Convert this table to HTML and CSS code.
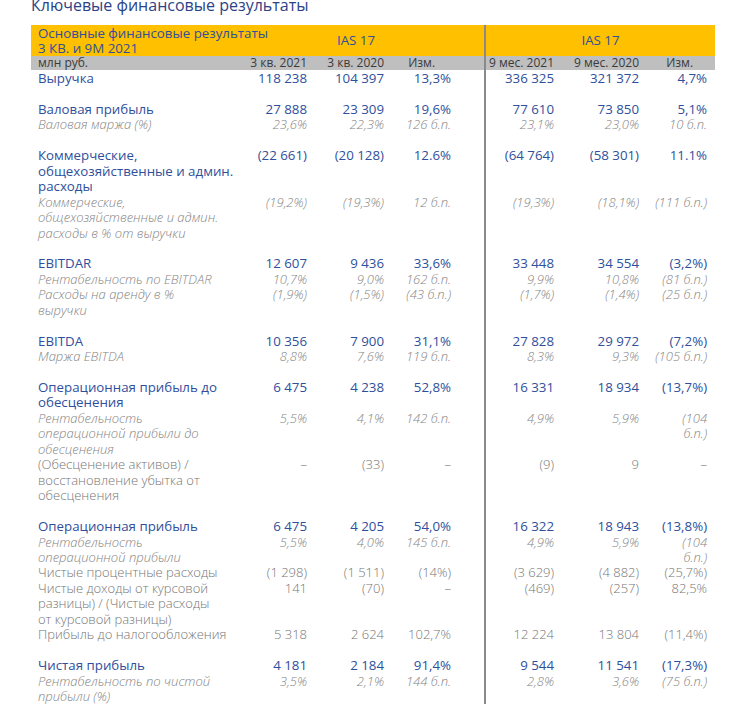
FILE: index.html
```html
<!DOCTYPE html>
<html lang="ru">
<head>
<meta charset="utf-8">
<link rel="stylesheet" href="styles.css">
</head>
<body>
<h1 class="title">Ключевые финансовые результаты</h1>
<table class="fin">
  <colgroup>
    <col class="c-label"><col class="c1"><col class="c2"><col class="c3"><col class="c4"><col class="c5"><col class="c6">
  </colgroup>
  <thead>
    <tr class="hdr">
      <th class="lbl">Основные финансовые результаты<br>3 КВ. и 9М 2021</th>
      <th colspan="3" class="ias">IAS 17</th>
      <th colspan="3" class="ias d">IAS 17</th>
    </tr>
    <tr class="sub">
      <th class="lbl">млн руб.</th>
      <th>3 кв. 2021</th>
      <th>3 кв. 2020</th>
      <th class="chg1">Изм.</th>
      <th class="d">9 мес. 2021</th>
      <th>9 мес. 2020</th>
      <th class="chg2">Изм.</th>
    </tr>
  </thead>
  <tbody>
    <tr class="main"><td class="lbl">Выручка</td><td>118 238</td><td>104 397</td><td>13,3%</td><td class="d">336 325</td><td>321 372</td><td>4,7%</td></tr>
    <tr class="sp"><td colspan="4"></td><td colspan="3" class="d"></td></tr>

    <tr class="main"><td class="lbl">Валовая прибыль</td><td>27 888</td><td>23 309</td><td>19,6%</td><td class="d">77 610</td><td>73 850</td><td>5,1%</td></tr>
    <tr class="it"><td class="lbl">Валовая маржа (%)</td><td>23,6%</td><td>22,3%</td><td>126 б.п.</td><td class="d">23,1%</td><td>23,0%</td><td>10 б.п.</td></tr>
    <tr class="sp"><td colspan="4"></td><td colspan="3" class="d"></td></tr>

    <tr class="main"><td class="lbl">Коммерческие,<br>общехозяйственные и админ.<br>расходы</td><td>(22 661)</td><td>(20 128)</td><td>12.6%</td><td class="d">(64 764)</td><td>(58 301)</td><td>11.1%</td></tr>
    <tr class="it"><td class="lbl">Коммерческие,<br>общехозяйственные и админ.<br>расходы в % от выручки</td><td>(19,2%)</td><td>(19,3%)</td><td>12 б.п.</td><td class="d">(19,3%)</td><td>(18,1%)</td><td>(111 б.п.)</td></tr>
    <tr class="sp"><td colspan="4"></td><td colspan="3" class="d"></td></tr>

    <tr class="main"><td class="lbl">EBITDAR</td><td>12 607</td><td>9 436</td><td>33,6%</td><td class="d">33 448</td><td>34 554</td><td>(3,2%)</td></tr>
    <tr class="it"><td class="lbl">Рентабельность по EBITDAR</td><td>10,7%</td><td>9,0%</td><td>162 б.п.</td><td class="d">9,9%</td><td>10,8%</td><td>(81 б.п.)</td></tr>
    <tr class="it"><td class="lbl">Расходы на аренду в %<br>выручки</td><td>(1,9%)</td><td>(1,5%)</td><td>(43 б.п.)</td><td class="d">(1,7%)</td><td>(1,4%)</td><td>(25 б.п.)</td></tr>
    <tr class="sp"><td colspan="4"></td><td colspan="3" class="d"></td></tr>

    <tr class="main"><td class="lbl">EBITDA</td><td>10 356</td><td>7 900</td><td>31,1%</td><td class="d">27 828</td><td>29 972</td><td>(7,2%)</td></tr>
    <tr class="it"><td class="lbl">Маржа EBITDA</td><td>8,8%</td><td>7,6%</td><td>119 б.п.</td><td class="d">8,3%</td><td>9,3%</td><td>(105 б.п.)</td></tr>
    <tr class="sp"><td colspan="4"></td><td colspan="3" class="d"></td></tr>

    <tr class="main"><td class="lbl">Операционная прибыль до<br>обесценения</td><td>6 475</td><td>4 238</td><td>52,8%</td><td class="d">16 331</td><td>18 934</td><td>(13,7%)</td></tr>
    <tr class="it"><td class="lbl">Рентабельность<br>операционной прибыли до<br>обесценения</td><td>5,5%</td><td>4,1%</td><td>142 б.п.</td><td class="d">4,9%</td><td>5,9%</td><td>(104<br>б.п.)</td></tr>
    <tr class="pl"><td class="lbl">(Обесценение активов) /<br>восстановление убытка от<br>обесценения</td><td>–</td><td>(33)</td><td>–</td><td class="d">(9)</td><td>9</td><td>–</td></tr>
    <tr class="sp"><td colspan="4"></td><td colspan="3" class="d"></td></tr>

    <tr class="main"><td class="lbl">Операционная прибыль</td><td>6 475</td><td>4 205</td><td>54,0%</td><td class="d">16 322</td><td>18 943</td><td>(13,8%)</td></tr>
    <tr class="it"><td class="lbl">Рентабельность<br>операционной прибыли</td><td>5,5%</td><td>4,0%</td><td>145 б.п.</td><td class="d">4,9%</td><td>5,9%</td><td>(104<br>б.п.)</td></tr>
    <tr class="pl"><td class="lbl">Чистые процентные расходы</td><td>(1 298)</td><td>(1 511)</td><td>(14%)</td><td class="d">(3 629)</td><td>(4 882)</td><td>(25,7%)</td></tr>
    <tr class="pl"><td class="lbl">Чистые доходы от курсовой<br>разницы) / (Чистые расходы<br>от курсовой разницы)</td><td>141</td><td>(70)</td><td>–</td><td class="d">(469)</td><td>(257)</td><td>82,5%</td></tr>
    <tr class="pl"><td class="lbl">Прибыль до налогообложения</td><td>5 318</td><td>2 624</td><td>102,7%</td><td class="d">12 224</td><td>13 804</td><td>(11,4%)</td></tr>
    <tr class="sp"><td colspan="4"></td><td colspan="3" class="d"></td></tr>

    <tr class="main"><td class="lbl">Чистая прибыль</td><td>4 181</td><td>2 184</td><td>91,4%</td><td class="d">9 544</td><td>11 541</td><td>(17,3%)</td></tr>
    <tr class="it"><td class="lbl">Рентабельность по чистой<br>прибыли (%)</td><td>3,5%</td><td>2,1%</td><td>144 б.п.</td><td class="d">2,8%</td><td>3,6%</td><td>(75 б.п.)</td></tr>
  </tbody>
</table>
</body>
</html>
```

FILE: styles.css
```css
html, body {
  margin: 0;
  padding: 0;
  background: #ffffff;
}
body {
  font-family: "Open Sans", "Noto Sans", sans-serif;
  width: 733px;
  height: 711px;
  overflow: hidden;
}
.title {
  margin: -5px 0 0 31px;
  font-size: 16px;
  line-height: 20px;
  font-weight: 400;
  color: #2c4388;
  height: 30px;
}
.fin {
  margin-left: 31px;
  border-collapse: collapse;
  border-spacing: 0;
  table-layout: fixed;
  width: 684px;
}
.c-label { width: 197px; }
.c1 { width: 82px; }
.c2 { width: 77px; }
.c3 { width: 98px; }
.c4 { width: 72px; }
.c5 { width: 85px; }
.c6 { width: 73px; }

.fin th, .fin td {
  padding: 0 3px 0 0;
  text-align: right;
  vertical-align: top;
  white-space: nowrap;
  font-weight: 400;
}
.fin .lbl {
  text-align: left;
  padding-left: 7px;
}
.fin td:nth-child(4) { padding-right: 33px; }
.fin td:nth-child(7) { padding-right: 8px; }
.fin .d { border-left: 2px solid #8a8a8a; }

.hdr th {
  background: #ffc000;
  color: #2f4f9c;
  font-size: 13.3px;
  line-height: 14.5px;
  height: 31px;
  vertical-align: middle;
}
.hdr .ias {
  text-align: center;
  padding: 0;
}
.sub th {
  background: #bfbfbf;
  color: #3a3a3a;
  font-size: 12px;
  line-height: 14px;
  height: 14px;
}
.sub .chg1 { padding-right: 49px; }
.sub .chg2 { padding-right: 22px; }

.fin tbody td {
  line-height: 15.45px;
}
.fin tbody tr:first-child td {
  padding-top: 1px;
}
.main td {
  color: #2f4f9c;
  font-size: 13.3px;
  font-weight: 500;
}
.it td {
  color: #858585;
  font-size: 13px;
  font-style: italic;
  font-weight: 300;
}
.pl td {
  color: #767676;
  font-size: 13px;
  font-weight: 300;
}
.sp td {
  height: 15.45px;
  padding: 0;
}
```
